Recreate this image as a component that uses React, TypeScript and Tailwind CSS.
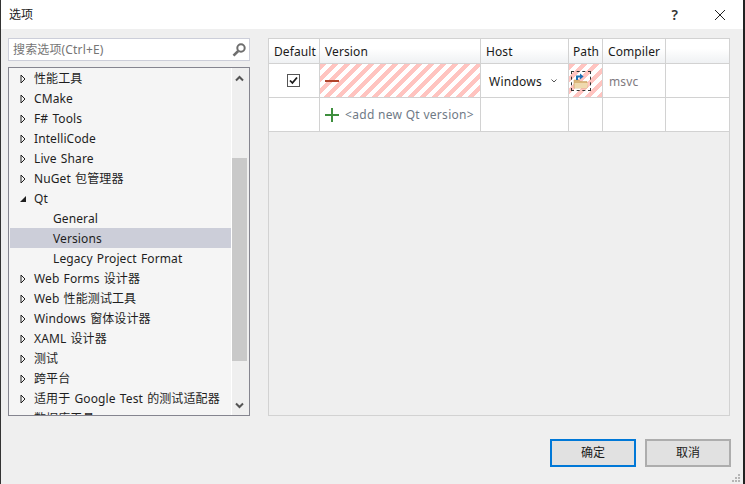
import React from "react";

const font = { fontFamily: '"Noto Sans", "Noto Sans CJK SC", sans-serif' };

function Closed() {
  return (
    <svg width="8" height="12" viewBox="0 0 8 12" className="shrink-0">
      <path d="M2 2 L6 6 L2 10 Z" fill="none" stroke="#1e1e1e" strokeWidth="1" />
    </svg>
  );
}

function Open() {
  return (
    <svg width="8" height="12" viewBox="0 0 8 12" className="shrink-0">
      <path d="M7 3 L7 9 L1 9 Z" fill="#1e1e1e" />
    </svg>
  );
}

type Row = { t: string; kind: "closed" | "open" | "child"; sel?: boolean };

const rows: Row[] = [
  { t: "性能工具", kind: "closed" },
  { t: "CMake", kind: "closed" },
  { t: "F# Tools", kind: "closed" },
  { t: "IntelliCode", kind: "closed" },
  { t: "Live Share", kind: "closed" },
  { t: "NuGet 包管理器", kind: "closed" },
  { t: "Qt", kind: "open" },
  { t: "General", kind: "child" },
  { t: "Versions", kind: "child", sel: true },
  { t: "Legacy Project Format", kind: "child" },
  { t: "Web Forms 设计器", kind: "closed" },
  { t: "Web 性能测试工具", kind: "closed" },
  { t: "Windows 窗体设计器", kind: "closed" },
  { t: "XAML 设计器", kind: "closed" },
  { t: "测试", kind: "closed" },
  { t: "跨平台", kind: "closed" },
  { t: "适用于 Google Test 的测试适配器", kind: "closed" },
  { t: "数据库工具", kind: "closed" },
];

const stripes =
  "bg-[repeating-linear-gradient(135deg,#ffc4c0_0px,#ffc4c0_4.25px,#ffffff_4.25px,#ffffff_8.5px)]";
const cols = "grid grid-cols-[51px_161px_88px_34px_63px_63px]";
const cell = "border-r border-b border-[#d2d2d2] flex items-center bg-white min-w-0";

function Head({ children, last, pl = "pl-[5px]" }: { children?: React.ReactNode; last?: boolean; pl?: string }) {
  return (
    <div
      className={`h-[25px] pt-[2px] ${pl} flex items-center border-b border-[#d2d2d2] ${last ? "" : "border-r"} bg-gradient-to-b from-white from-40% to-[#eff1f3] text-[12px] tracking-[0.1px] text-[#1a1a1a]`}
    >
      {children}
    </div>
  );
}

export default function App() {
  return (
    <div style={font} className="relative w-[745px] h-[484px] overflow-hidden flex bg-[#222222]">
      <div className="w-px shrink-0 bg-[#333333]" />
      <div className="w-[742px] shrink-0 flex flex-col bg-[#efefef]">
        <div className="h-[29px] shrink-0 bg-white flex items-center pl-[8px] text-[12px] text-[#1a1a1a]">
          <span>选项</span>
          <span className="ml-auto mr-[36px] text-[14px] font-semibold text-[#333333]">?</span>
          <svg width="12" height="12" viewBox="0 0 12 12" className="mr-[17px]">
            <path d="M1 1 L11 11 M11 1 L1 11" stroke="#222222" strokeWidth="1" />
          </svg>
        </div>

        <div className="flex pt-[9px] pl-[7px]">
          <div className="w-[242px] shrink-0 flex flex-col">
            <div className="h-[23px] bg-white border border-[#ccced9] flex items-center pl-[4px] pr-[2px] text-[12px] tracking-[0.15px] text-[#757575]">
              <span>搜索选项(Ctrl+E)</span>
              <svg width="16" height="16" viewBox="0 0 16 16" className="ml-auto">
                <circle cx="10" cy="6" r="3.7" fill="none" stroke="#6e6e6e" strokeWidth="2" />
                <path d="M7.2 9 L2.5 13.6" stroke="#6e6e6e" strokeWidth="2.6" />
              </svg>
            </div>

            <div className="mt-[6px] h-[349px] border border-[#85858f] bg-[#f5f5f5] flex overflow-hidden">
              <div className="w-[222px] shrink-0 pl-px overflow-hidden">
                {rows.map((r) => (
                  <div
                    key={r.t}
                    className={`h-[20px] pt-[2px] flex items-center text-[12px] tracking-[0.1px] [word-spacing:1px] whitespace-nowrap text-[#1e1e1e] ${r.sel ? "bg-[#ccced9]" : ""} ${r.kind === "child" ? "pl-[43px]" : "pl-[9px]"}`}
                  >
                    {r.kind === "closed" && <Closed />}
                    {r.kind === "open" && <Open />}
                    <span className={r.kind === "child" ? "" : "ml-[7px]"}>{r.t}</span>
                  </div>
                ))}
              </div>
              <div className="w-[18px] shrink-0 border-l border-white bg-[#efefef] flex flex-col items-center">
                <div className="h-[20px] flex items-center pt-[1px] pr-[2px]">
                  <svg width="9" height="7" viewBox="0 0 9 7">
                    <path d="M1 5.5 L4.5 2 L8 5.5" fill="none" stroke="#555555" strokeWidth="2" />
                  </svg>
                </div>
                <div className="mt-[70px] h-[203px] w-[15px] self-start bg-[#c9c9c9]" />
                <div className="mt-auto h-[20px] flex items-center pr-[2px]">
                  <svg width="9" height="7" viewBox="0 0 9 7">
                    <path d="M1 1.5 L4.5 5 L8 1.5" fill="none" stroke="#555555" strokeWidth="2" />
                  </svg>
                </div>
              </div>
            </div>
          </div>

          <div className="ml-[18px] w-[462px] h-[378px] shrink-0 border border-[#d2d2d2]">
            <div className={cols}>
              <Head>Default</Head>
              <Head>Version</Head>
              <Head>Host</Head>
              <Head pl="pl-[4px]">Path</Head>
              <Head>Compiler</Head>
              <Head last />

              <div className={`${cell} h-[34px] justify-center pr-px`}>
                <div className="w-[13px] h-[13px] border border-[#555555] bg-white flex items-center justify-center">
                  <svg width="11" height="11" viewBox="0 0 11 11">
                    <path d="M2 5.5 L4.4 8 L9 2.5" fill="none" stroke="#1a1a1a" strokeWidth="1.8" />
                  </svg>
                </div>
              </div>
              <div className={`${cell} h-[34px] pl-[5px] ${stripes}`}>
                <div className="w-[14px] h-[2px] bg-[#b1442c]" />
              </div>
              <div className={`${cell} h-[34px] pl-[8px] pt-[2px] text-[12px] tracking-[0.25px] text-[#1a1a1a]`}>
                <span>Windows</span>
                <svg width="6" height="4" viewBox="0 0 6 4" className="ml-[9px] mb-[2px]">
                  <path d="M0.5 0.5 L3 3 L5.5 0.5" fill="none" stroke="#555555" strokeWidth="1" />
                </svg>
              </div>
              <div className={`${cell} h-[34px] pl-[2px] ${stripes}`}>
                <div className="w-[20px] h-[20px] border border-dashed border-[#333333] flex items-center justify-center">
                  <svg width="16" height="17" viewBox="0 0 16 17">
                    <path d="M1 8 L6 8 L7 9.5 L14 9.5 L14 16 L1 16 Z" fill="#dcb67a" stroke="#c9a266" strokeWidth="0.6" />
                    <path d="M1.5 11 L15 11 L14 16 L1.5 16 Z" fill="#efd9ae" />
                    <path d="M4 8 L4 4.6 L8 4.6" fill="none" stroke="#1b6fb5" strokeWidth="2" />
                    <path d="M7 1.6 L10.6 4.6 L7 7.6 Z" fill="#1b6fb5" />
                  </svg>
                </div>
              </div>
              <div className={`${cell} h-[34px] pl-[6px] pt-[2px] text-[12px] tracking-[0.15px] text-[#7f7a80]`}>msvc</div>
              <div className="h-[34px] border-b border-[#d2d2d2] bg-white" />

              <div className={`${cell} h-[34px]`} />
              <div className={`${cell} h-[34px] pl-[5px]`}>
                <svg width="14" height="14" viewBox="0 0 14 14" className="shrink-0">
                  <path d="M7 0 L7 14 M0 7 L14 7" stroke="#3e8f3e" strokeWidth="2" />
                </svg>
                <span className="ml-[6px] pt-[1px] text-[12px] tracking-[0.3px] whitespace-nowrap text-[#6f7a86]">&lt;add new Qt version&gt;</span>
              </div>
              <div className={`${cell} h-[34px]`} />
              <div className={`${cell} h-[34px]`} />
              <div className={`${cell} h-[34px]`} />
              <div className="h-[34px] border-b border-[#d2d2d2] bg-white" />
            </div>
          </div>
        </div>

        <div className="mt-[23px] flex justify-end gap-[9px] pr-[12px]">
          <button className="w-[86px] h-[28px] border-2 border-[#0078d7] bg-[#e1e1e1] text-[12px] text-[#1a1a1a]">确定</button>
          <button className="w-[86px] h-[28px] border-2 border-[#adadad] bg-[#e1e1e1] text-[12px] text-[#1a1a1a]">取消</button>
        </div>
      </div>

      <svg width="8" height="8" viewBox="0 0 8 8" className="absolute left-[732px] top-[474px]">
        <path d="M6 0h2v2H6z M3 3h2v2H3z M6 3h2v2H6z M0 6h2v2H0z M3 6h2v2H3z M6 6h2v2H6z" fill="#b5b5b5" />
      </svg>
    </div>
  );
}
